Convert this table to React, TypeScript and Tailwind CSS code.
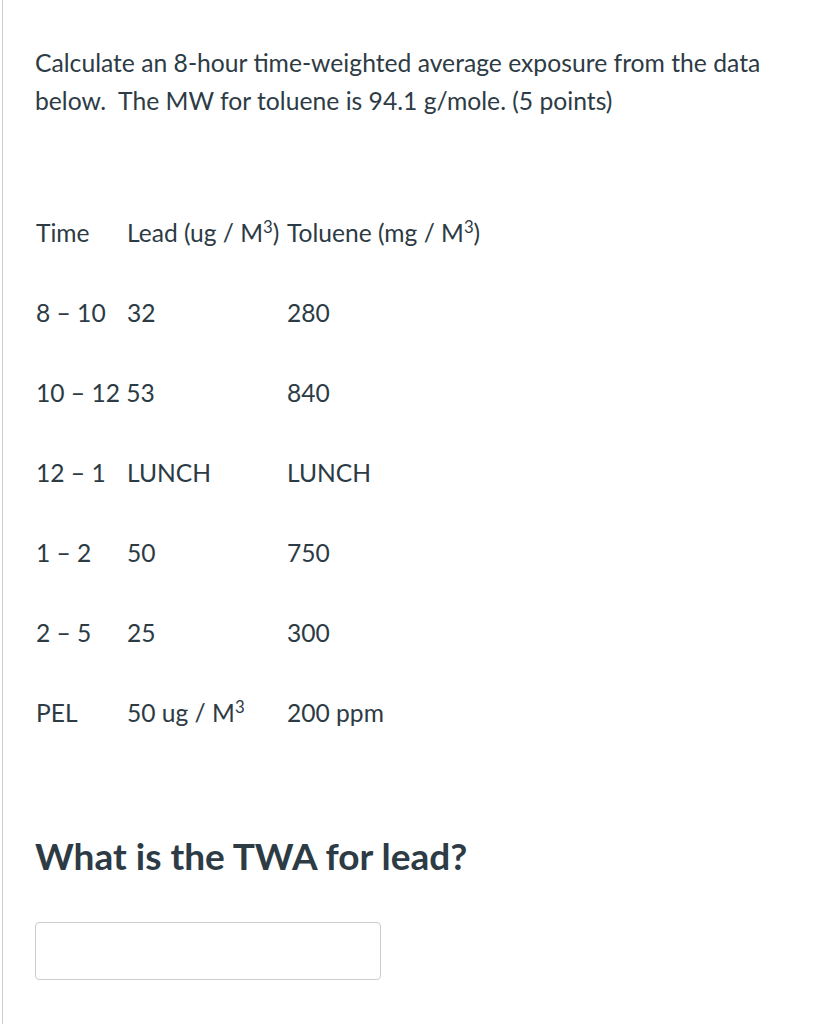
const rows: [string, string, string][] = [
  ['8 – 10', '32', '280'],
  ['10 – 12 53', '', '840'],
  ['12 – 1', 'LUNCH', 'LUNCH'],
  ['1 – 2', '50', '750'],
  ['2 – 5', '25', '300'],
];

function Row({ a, b, c }: { a: React.ReactNode; b: React.ReactNode; c: React.ReactNode }) {
  return (
    <div className="flex h-[38px] items-center whitespace-nowrap">
      <span className="w-[91px] shrink-0 overflow-visible">{a}</span>
      <span className="w-[160px] shrink-0">{b}</span>
      <span>{c}</span>
    </div>
  );
}

export default function App() {
  return (
    <div
      className="min-h-[1024px] bg-white text-[#2d3b45]"
      style={{ fontFamily: 'Lato, "Open Sans", sans-serif' }}
    >
      <div className="ml-[2px] min-h-[1024px] border-l border-[#c7cdd1] pl-[32px] pt-[44px]">
        <p className="w-[750px] text-[24.7px] leading-[38px]">
          Calculate an 8-hour time-weighted average exposure from the data below.&nbsp; The MW for
          toluene is 94.1 g/mole. (5 points)
        </p>

        <div className="ml-[1px] mt-[94px] flex flex-col gap-[42px] text-[24.6px]">
          <Row
            a="Time"
            b={
              <>
                Lead (ug / M<sup className="text-[0.68em]">3</sup>)
              </>
            }
            c={
              <>
                Toluene (mg / M<sup className="text-[0.68em]">3</sup>)
              </>
            }
          />
          {rows.map(([a, b, c]) => (
            <Row key={a} a={a} b={b} c={c} />
          ))}
          <Row
            a="PEL"
            b={
              <>
                50 ug / M<sup className="text-[0.68em]">3</sup>
              </>
            }
            c="200 ppm"
          />
        </div>

        <h2 className="mt-[104px] text-[37px] font-bold leading-[40px]">What is the TWA for lead?</h2>

        <input
          type="text"
          className="mt-[46px] block h-[58px] w-[346px] rounded-[4px] border border-[#c7cdd1] bg-white px-3 outline-none"
        />
      </div>
    </div>
  );
}
